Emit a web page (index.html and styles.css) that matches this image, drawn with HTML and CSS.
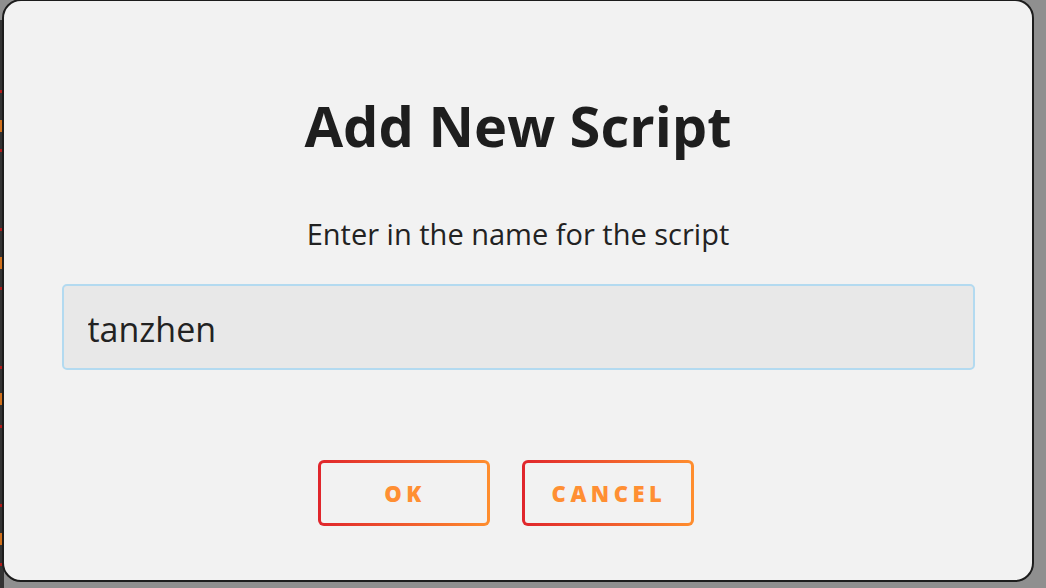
FILE: index.html
```html
<!DOCTYPE html>
<html lang="en">
<head>
    <meta charset="UTF-8">
    <meta name="viewport" content="width=device-width, initial-scale=1.0">
    <title>Add New Script</title>
    <link rel="stylesheet" href="styles.css">
</head>
<body>
    <div class="backdrop">
        <span class="mark red" style="top: 70px;"></span>
        <span class="mark orange" style="top: 100px;"></span>
        <span class="mark red" style="top: 129px;"></span>
        <span class="mark red" style="top: 208px;"></span>
        <span class="mark orange" style="top: 237px;"></span>
        <span class="mark red" style="top: 267px;"></span>
        <span class="mark red" style="top: 346px;"></span>
        <span class="mark orange" style="top: 373px;"></span>
        <span class="mark red" style="top: 405px;"></span>
        <span class="mark red" style="top: 484px;"></span>
        <span class="mark orange" style="top: 513px;"></span>
        <span class="mark red" style="top: 543px;"></span>
    </div>
    <div class="dialog">
        <h1 class="title">Add New Script</h1>
        <p class="prompt">Enter in the name for the script</p>
        <input class="name-input" type="text" value="tanzhen">
        <div class="actions">
            <button class="btn">OK</button>
            <button class="btn">CANCEL</button>
        </div>
    </div>
</body>
</html>
```

FILE: styles.css
```css
html, body {
    margin: 0;
    padding: 0;
    height: 100%;
    overflow: hidden;
}

body {
    background-color: #8f8f8f;
    font-family: "Open Sans", "Noto Sans", sans-serif;
    position: relative;
}

.backdrop {
    position: absolute;
    left: 0;
    top: 20px;
    width: 4px;
    height: 568px;
    background-color: #333;
}

.mark {
    position: absolute;
    left: 0;
    width: 2px;
}

.mark.red {
    height: 3px;
    background-color: #b01c1c;
}

.mark.orange {
    height: 12px;
    background-color: #d0701c;
}

.dialog {
    position: absolute;
    left: 2px;
    top: -1px;
    width: 1028px;
    height: 579px;
    box-sizing: content-box;
    border: 2px solid #1c1c1c;
    border-radius: 19px;
    background-color: #f2f2f2;
    display: flex;
    flex-direction: column;
    align-items: center;
}

.title {
    margin: 85px 0 0;
    font-size: 56px;
    font-weight: 700;
    line-height: 79px;
    color: #1e1e1e;
}

.prompt {
    margin: 49px 0 0;
    font-size: 29px;
    line-height: 40px;
    color: #222;
}

.name-input {
    margin-top: 30px;
    width: 913px;
    height: 86px;
    box-sizing: border-box;
    border: 2px solid #b3daf0;
    border-radius: 5px;
    background-color: #e8e8e8;
    padding: 4px 24px 0;
    font-family: inherit;
    font-size: 34px;
    color: #222;
    outline: none;
}

.actions {
    margin-top: 90px;
    display: flex;
    gap: 32px;
    padding-right: 24px;
}

.btn {
    width: 172px;
    height: 66px;
    border: 3px solid transparent;
    border-radius: 6px;
    background: linear-gradient(#f2f2f2, #f2f2f2) padding-box,
                linear-gradient(90deg, #e0252c, #ff8e2e) border-box;
    font-family: inherit;
    font-size: 22px;
    font-weight: 800;
    letter-spacing: 4.5px;
    color: #ff8f33;
    cursor: pointer;
    padding: 0 0 0 2px;
}
```
